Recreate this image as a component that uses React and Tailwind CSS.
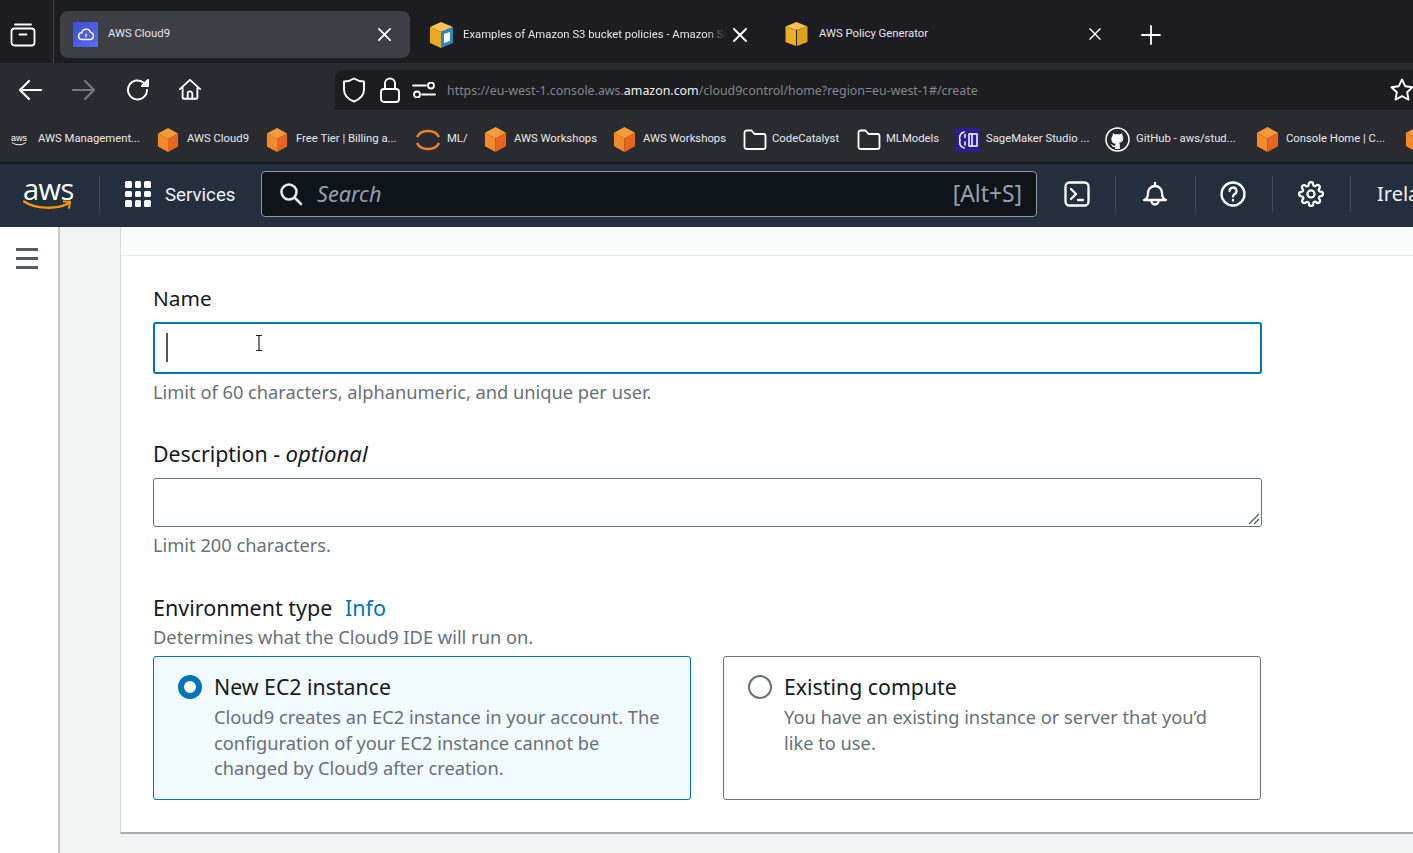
import React from "react";

const W = ({ children, w = 24, h, vb = "0 0 24 24", sw = 2, stroke = "white", className = "" }) => (
  <svg width={w} height={h || w} viewBox={vb} fill="none" stroke={stroke} strokeWidth={sw} strokeLinecap="round" strokeLinejoin="round" className={"shrink-0 " + className}>{children}</svg>
);

const Cube = ({ w = 24 }) => (
  <svg width={w} height={w + 2} viewBox="0 0 24 26" className="shrink-0">
    <path d="M12 0 L23 6 L12 12 L1 6Z" fill="#f79a3a" />
    <path d="M1 6 L12 12 V26 L1 20Z" fill="#f58a2a" />
    <path d="M23 6 L12 12 V26 L23 20Z" fill="#e8651f" />
  </svg>
);

const Folder = () => (
  <W w={24} h={22} vb="0 0 24 22" sw={1.8}>
    <path d="M1.5 3.5a2 2 0 0 1 2-2h5l3 3.5h9a2 2 0 0 1 2 2v11a2 2 0 0 1-2 2h-17a2 2 0 0 1-2-2z" />
  </W>
);

const Close = ({ s = 14, sw = 2 }) => (
  <W w={s} vb="0 0 14 14" sw={sw}><path d="M1 1 L13 13 M13 1 L1 13" /></W>
);

function Bm({ icon, label, w }) {
  return (
    <div className="flex items-center shrink-0" style={{ width: w }}>
      <div className="w-[30px] flex items-center shrink-0">{icon}</div>
      <span className="text-[11.3px] text-[#e8e8ea] whitespace-nowrap">{label}</span>
    </div>
  );
}

const Sep = () => <div className="w-px h-[36px] bg-[#414b59] shrink-0" />;

function Radio({ checked }) {
  return checked ? (
    <div className="mt-[2px] w-[24px] h-[24px] rounded-full border-[6.5px] border-[#0073bb] bg-white shrink-0" />
  ) : (
    <div className="mt-[2px] w-[24px] h-[24px] rounded-full border-2 border-[#687078] bg-white shrink-0" />
  );
}

export default function App() {
  return (
    <div className="w-[1413px] h-[853px] overflow-hidden bg-[#f2f3f3] flex flex-col font-['Noto_Sans',sans-serif]">
      {/* tab strip */}
      <div className="h-[63px] bg-[#1c1c21] flex items-start shrink-0 font-['Roboto',sans-serif]">
        <div className="w-[54px] h-[63px] border-r border-[#44454b] flex items-center pl-[10px] pt-[6px] shrink-0">
          <W w={26} vb="0 0 26 26" sw={1.8}>
            <path d="M5 2.5h16" />
            <rect x="1.5" y="6.5" width="23" height="17" rx="3" />
            <path d="M9.5 12.5h7" />
          </W>
        </div>
        <div className="ml-[6px] mt-[11px] w-[350px] h-[47px] rounded-[8px] bg-[#3d3e46] flex items-center pl-[13px] shrink-0">
          <div className="w-[25px] h-[25px] bg-gradient-to-br from-[#3b4fd8] to-[#5b6ce8] flex items-center justify-center shrink-0">
            <W w={18} vb="0 0 24 24" sw={1.8}><path d="M7 18a4.5 4.5 0 0 1-.6-9A6 6 0 0 1 18 8.5a4.8 4.8 0 0 1-.5 9.5z" /><path d="M12 11v3" /></W>
          </div>
          <span className="ml-[10px] text-[11.3px] text-[#e6e6e8] w-[270px] whitespace-nowrap">AWS Cloud9</span>
          <Close s={13} />
        </div>
        <div className="ml-[19px] mt-[22px] flex items-center shrink-0">
          <svg width="25" height="26" viewBox="0 0 25 26" className="shrink-0">
            <path d="M1 5 L12 0 L24 5 L12 10Z" fill="#f6c453" />
            <path d="M1 5 L12 10 V26 L1 21Z" fill="#eaa91f" />
            <path d="M24 5 L12 10 V26 L24 21Z" fill="#2f86c5" />
            <path d="M15 12 L21 10 V19 L15 21Z" fill="#fff" />
          </svg>
          <span className="ml-[9px] w-[264px] overflow-hidden whitespace-nowrap text-[11.3px] text-[#e6e6e8] [mask-image:linear-gradient(to_right,black_92%,transparent)]">Examples of Amazon S3 bucket policies - Amazon Simple</span>
          <span className="ml-[6px]"><Close s={14} /></span>
        </div>
        <div className="ml-[38px] mt-[22px] flex items-center shrink-0">
          <svg width="23" height="24" viewBox="0 0 23 24" className="shrink-0">
            <path d="M0.5 4.5 L11.5 0 L22.5 4.5 L11.5 8Z" fill="#f6c453" />
            <path d="M0.5 4.5 L11 8 V24 L0.5 20Z" fill="#eeb022" />
            <path d="M22.5 4.5 L12 8 V24 L22.5 20Z" fill="#e0a11a" />
          </svg>
          <span className="ml-[11px] w-[270px] whitespace-nowrap text-[11.3px] text-[#e6e6e8]">AWS Policy Generator</span>
          <Close s={12} sw={1.6} />
        </div>
        <div className="ml-[40px] mt-[25px] shrink-0">
          <W w={20} vb="0 0 20 20" sw={1.8}><path d="M10 1v18M1 10h18" /></W>
        </div>
      </div>

      {/* nav bar */}
      <div className="h-[47px] bg-[#2a2b30] flex items-end shrink-0">
        <div className="h-[47px] w-[335px] flex items-center pl-[18px] pt-[6px] shrink-0">
          <W w={24} sw={2.2}><path d="M23 12H2M11 3l-9 9 9 9" /></W>
          <div className="ml-[30px]"><W w={24} sw={2.2} stroke="#77787c"><path d="M1 12h21M13 3l9 9-9 9" /></W></div>
          <div className="ml-[30px]"><W w={24} sw={2}><path d="M21 12a9.5 9.5 0 1 1-3-7" /><path d="M22 2v6h-6z" fill="white" /></W></div>
          <div className="ml-[28px]"><W w={24} vb="0 0 26 26" sw={2}><path d="M2 12 13 2l11 10M5 10v11a1.5 1.5 0 0 0 1.5 1.5h13A1.5 1.5 0 0 0 21 21V10" /><path d="M10.5 22.5V17a2.5 2.5 0 0 1 5 0v5.500" /></W></div>
        </div>
        <div className="h-[40px] flex-1 bg-[#1c1c21] rounded-tl-[8px] flex items-center pl-[7px]">
          <W w={24} h={26} vb="0 0 24 26" sw={1.9}><path d="M12 1.500c3 2 7 3 10 3v8c0 6-5 10-10 12-5-2-10-6-10-12v-8c3 0 7-1 10-3z" /></W>
          <div className="ml-[14px]"><W w={20} h={26} vb="0 0 20 26" sw={1.9}><rect x="1" y="12" width="18" height="13" rx="3" /><path d="M5 12V6.500a5 5 0 0 1 10 0V12" /></W></div>
          <div className="ml-[12px]"><W w={24} h={16} vb="0 0 24 16" sw={1.8}><path d="M1 3.500h13M10 12.500h13" /><circle cx="19" cy="3.500" r="3" /><circle cx="5" cy="12.500" r="3" /></W></div>
          <span className="ml-[11px] mt-[3px] w-[943px] text-[12.4px] text-[#85868a] whitespace-nowrap">https://eu-west-1.console.aws.<span className="text-[#f2f2f3]">amazon.com</span>/cloud9control/home?region=eu-west-1#/create</span>
          <W w={24} sw={1.9}><path d="M12 1.500l3.200 6.700 7.300 1-5.300 5.100 1.300 7.300-6.500-3.500-6.500 3.500 1.300-7.300L1.500 9.200l7.300-1z" /></W>
        </div>
      </div>

      {/* bookmarks */}
      <div className="h-[52px] bg-[#2a2b30] flex items-center pl-[11px] pt-[7px] shrink-0 overflow-hidden font-['Roboto',sans-serif]">
        <div className="flex items-center shrink-0 w-[146px]">
          <span className="w-[27px] flex flex-col items-start shrink-0 leading-none">
            <span className="text-[9px] text-white font-['Liberation_Sans',sans-serif] leading-[8px]">aws</span>
            <svg width="16" height="4" viewBox="0 0 16 4"><path d="M1 .5c4 3 10 3 14 0" stroke="white" fill="none" /></svg>
          </span>
          <span className="text-[11.3px] text-[#e8e8ea] whitespace-nowrap">AWS Management...</span>
        </div>
        <Bm icon={<Cube w={22} />} label="AWS Cloud9" w={109} />
        <Bm icon={<Cube w={22} />} label="Free Tier | Billing a..." w={150} />
        <div className="flex items-center shrink-0 w-[68px]">
          <svg width="24" height="26" viewBox="0 0 24 26" className="mr-[7px] shrink-0">
            <path d="M1 10C5 2 19 2 23 10M1 16c4 8 18 8 22 0" stroke="#f0832a" strokeWidth="2.500" fill="none" />
          </svg>
          <span className="text-[11.3px] text-[#e8e8ea]">ML/</span>
        </div>
        <Bm icon={<Cube w={23} />} label="AWS Workshops" w={129} />
        <Bm icon={<Cube w={23} />} label="AWS Workshops" w={130} />
        <div className="flex items-center shrink-0 w-[114px]">
          <Folder /><span className="ml-[5px] text-[11.3px] text-[#e8e8ea] whitespace-nowrap">CodeCatalyst</span>
        </div>
        <div className="flex items-center shrink-0 w-[99px]">
          <Folder /><span className="ml-[5px] text-[11.3px] text-[#e8e8ea] whitespace-nowrap">MLModels</span>
        </div>
        <div className="flex items-center shrink-0 w-[149px]">
          <div className="w-[24px] h-[24px] bg-[#2b1f8f] flex items-center justify-center shrink-0">
            <W w={22} vb="0 0 22 22" sw={1.5}><path d="M7 3C3 4 2 8 3 11c-1 3 0 7 4 8" /><path d="M8 5.500v3M8 13v3" /><rect x="12" y="5" width="8" height="12" /><path d="M15 5v12" /></W>
          </div>
          <span className="ml-[6px] text-[11.3px] text-[#e8e8ea] whitespace-nowrap">SageMaker Studio ...</span>
        </div>
        <div className="flex items-center shrink-0 w-[151px]">
          <svg width="25" height="25" viewBox="0 0 25 25" className="shrink-0">
            <circle cx="12.500" cy="12.500" r="11.500" fill="#24292e" stroke="white" strokeWidth="1.500" />
            <path d="M8 6l2 1.500a8 8 0 0 1 5 0L17 6l.6 3c1 1.500 1 4-.5 5.500-1 1-2.500 1.300-3 1.300.5.500.7 1 .7 2V22h-4.600v-2c-2 .4-3-.4-3.500-1.800-.3-.6-.7-1-1.200-1.200 1-.2 1.500.3 2 1 .6.800 1.400 1 2.700.6 0-.8.300-1.300.7-1.800-1 0-2.500-.4-3.500-1.300C6 13 6 10.500 7.500 9z" fill="white" />
          </svg>
          <span className="ml-[6px] text-[11.3px] text-[#e8e8ea] whitespace-nowrap">GitHub - aws/stud...</span>
        </div>
        <Bm icon={<Cube w={23} />} label="Console Home | C..." w={149} />
        <Cube w={23} />
      </div>

      {/* console header */}
      <div className="h-[65px] bg-[#232f3e] border-t-[2px] border-[#15191f] pb-[3px] flex items-center shrink-0 overflow-hidden">
        <div className="w-[99px] pl-[23px] shrink-0 flex flex-col items-start">
          <span className="text-[29px] leading-[22px] text-white tracking-[-0.5px] font-['Open_Sans',sans-serif]">aws</span>
          <svg width="50" height="12" viewBox="0 0 50 12" className="-mt-[1px]">
            <path d="M1 2.500C12 10 34 11 46 4" stroke="#f90" strokeWidth="2.300" fill="none" strokeLinecap="round" />
            <path d="M40 2.500l7 .2-1 7" stroke="#f90" strokeWidth="2" fill="none" />
          </svg>
        </div>
        <Sep />
        <div className="ml-[25px]">
          <div className="grid grid-cols-3 gap-[3px] w-[26px]">
            {Array.from({ length: 9 }).map((_, i) => <div key={i} className="w-[6.600px] h-[6.600px] rounded-[1.500px] bg-white" />)}
          </div>
        </div>
        <span className="ml-[14px] mt-[2px] w-[96px] text-[18.700px] text-[#f2f3f3] shrink-0 font-['Roboto',sans-serif]">Services</span>
        <div className="w-[776px] h-[46px] bg-[#0f141a] border border-[#8d99a8] rounded-[4px] flex items-center pl-[17px] shrink-0">
          <W w={24} sw={2.600} stroke="#e6e8ea"><circle cx="10" cy="10" r="7.500" /><path d="M16 16l6 6" /></W>
          <span className="ml-[14px] flex-1 text-[21.600px] italic text-[#95a0ac]">Search</span>
          <span className="mr-[14px] text-[22.800px] text-[#95a0ac]">[Alt+S]</span>
        </div>
        <div className="ml-[27px]">
          <W w={26} vb="0 0 26 26" sw={2.300}><rect x="1.500" y="1.500" width="23" height="23" rx="4" /><path d="M7 8l5 5-5 5M14 19h5" /></W>
        </div>
        <div className="ml-[25px]"><Sep /></div>
        <div className="ml-[26px]">
          <W w={26} vb="0 0 26 26" sw={2.300}><path d="M2 19c3-1 4-3 4-7a7 7 0 0 1 14 0c0 4 1 6 4 7z" /><path d="M13 2v3M9.500 20a3.500 3.500 0 0 0 7 0" /></W>
        </div>
        <div className="ml-[27px]"><Sep /></div>
        <div className="ml-[24px]">
          <W w={26} vb="0 0 26 26" sw={2.300}><circle cx="13" cy="13" r="11.500" /><path d="M9.500 10a3.500 3.500 0 1 1 5 3.200c-1 .6-1.500 1.200-1.500 2.300" /><path d="M13 19v.5" /></W>
        </div>
        <div className="ml-[26px]"><Sep /></div>
        <div className="ml-[25px]">
          <W w={26} vb="0 0 24 24" sw={2.100}><circle cx="12" cy="12" r="3.300" /><path d="M19.400 15a1.650 1.650 0 0 0 .33 1.820l.06.06a2 2 0 1 1-2.830 2.830l-.06-.06a1.650 1.650 0 0 0-2.800 1.170V21a2 2 0 0 1-4 0v-.09a1.650 1.650 0 0 0-2.800-1.170l-.06.06a2 2 0 1 1-2.830-2.830l.06-.06a1.650 1.650 0 0 0-1.170-2.800H3a2 2 0 0 1 0-4h.09a1.650 1.650 0 0 0 1.170-2.800l-.06-.06a2 2 0 1 1 2.830-2.830l.06.06a1.650 1.650 0 0 0 2.800-1.170V3a2 2 0 0 1 4 0v.09a1.650 1.650 0 0 0 2.800 1.170l.06-.06a2 2 0 1 1 2.830 2.830l-.06.06a1.650 1.650 0 0 0 1.170 2.800H21a2 2 0 0 1 0 4h-.09a1.650 1.650 0 0 0-1.510 1z" /></W>
        </div>
        <div className="ml-[26px]"><Sep /></div>
        <span className="ml-[26px] text-[20px] text-[#f2f3f3] whitespace-nowrap">Ireland</span>
      </div>

      {/* body */}
      <div className="flex-1 flex min-h-0">
        <div className="w-[60px] bg-white border-r-[2px] border-[#c6c8ca] shrink-0 pl-[16px] pt-[21px]">
          <div className="flex flex-col gap-[6px] w-[22px]">
            <div className="h-[3px] bg-[#545b64]" />
            <div className="h-[3px] bg-[#545b64]" />
            <div className="h-[3px] bg-[#545b64]" />
          </div>
        </div>
        <div className="flex-1 pl-[60px] pb-[20px] min-w-0">
          <div className="w-[1300px] h-[607px] bg-white border-l border-[#d5dbdb] border-b-[2px] border-b-[#a9acae] flex flex-col">
            <div className="h-[29px] bg-[#fafbfb] border-b border-[#eaeded] shrink-0" />
            <div className="pl-[32px] w-[1141px] text-[#16191f] relative">
              <div className="mt-[28px] text-[20.800px] leading-[28px]">Name</div>
              <div className="mt-[10px] h-[52px] border-2 border-[#0073bb] rounded-[3px] bg-white relative">
                <div className="absolute left-[11px] top-[9px] w-[2px] h-[29px] bg-[#555]" />
                <svg width="8" height="16" viewBox="0 0 8 16" className="absolute left-[100px] top-[11px]"><path d="M1 .5h6M1 15.500h6M4 .5v15" stroke="#222" strokeWidth="1.200" fill="none" /></svg>
              </div>
              <div className="mt-[5px] text-[18.250px] leading-[26px] text-[#687078]">Limit of 60 characters, alphanumeric, and unique per user.</div>
              <div className="mt-[35px] text-[21.300px] leading-[28px]">Description - <span className="italic text-[22.200px]">optional</span></div>
              <div className="mt-[10px] h-[49px] border border-[#687078] rounded-[3px] bg-white relative">
                <svg width="12" height="12" viewBox="0 0 12 12" className="absolute right-[1px] bottom-[1px]"><path d="M1 11L11 1M6 11l5-5" stroke="#555" strokeWidth="1.200" /></svg>
              </div>
              <div className="mt-[5px] text-[18.250px] leading-[26px] text-[#687078]">Limit 200 characters.</div>
              <div className="mt-[36px] text-[21.500px] leading-[28px]">Environment type <span className="ml-[7px] text-[#0073bb]">Info</span></div>
              <div className="mt-[2px] text-[18.300px] leading-[26px] text-[#687078]">Determines what the Cloud9 IDE will run on.</div>
              <div className="mt-[6px] flex gap-[32px]">
                <div className="w-[538px] h-[144px] bg-[#f1faff] border border-[#0073bb] rounded-[3px] pl-[24px] pt-[16px] flex">
                  <Radio checked />
                  <div className="ml-[12px]">
                    <div className="text-[21.300px] leading-[28px]">New EC2 instance</div>
                    <div className="mt-[3px] text-[18.250px] leading-[25.500px] text-[#687078]">Cloud9 creates an EC2 instance in your account. The<br />configuration of your EC2 instance cannot be<br />changed by Cloud9 after creation.</div>
                  </div>
                </div>
                <div className="w-[538px] h-[144px] bg-white border border-[#687078] rounded-[3px] pl-[24px] pt-[16px] flex">
                  <Radio />
                  <div className="ml-[12px]">
                    <div className="text-[21.300px] leading-[28px]">Existing compute</div>
                    <div className="mt-[3px] text-[18.250px] leading-[25.500px] text-[#687078]">You have an existing instance or server that you’d<br />like to use.</div>
                  </div>
                </div>
              </div>
            </div>
          </div>
        </div>
      </div>
    </div>
  );
}
